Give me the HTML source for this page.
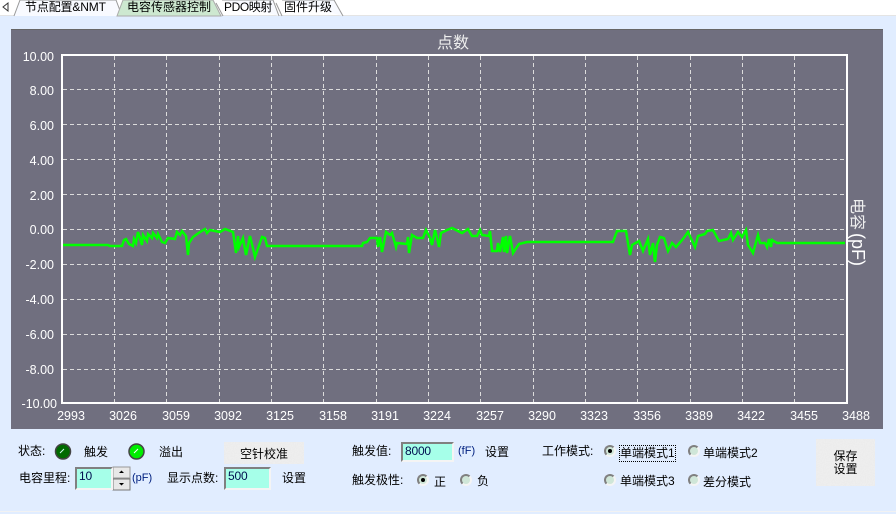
<!DOCTYPE html>
<html><head><meta charset="utf-8">
<style>
html,body{margin:0;padding:0}
body{width:896px;height:514px;overflow:hidden;background:#e1edff;position:relative;font:12px "Liberation Sans","WenQuanYi Zen Hei","Noto Sans CJK SC",sans-serif;color:#000}
.a{position:absolute;white-space:nowrap;line-height:14px}
.inp{position:absolute;box-sizing:border-box;background:#a6ffe9;border:2px solid;border-color:#808080 #f4f4f4 #f4f4f4 #808080;outline:0;font:12px/15px "Liberation Sans",sans-serif;padding-left:2px;color:#001050;letter-spacing:-.2px}
.r{position:absolute;width:12px;height:12px;box-sizing:border-box;border-radius:50%;background:#cfe6d8;border:2px solid;border-color:#808080 #f4f4f4 #f4f4f4 #808080}
.r.on:after{content:"";position:absolute;left:2px;top:2px;width:4px;height:4px;border-radius:50%;background:#000}
.btn{position:absolute;text-align:center}
</style></head><body>
<svg class="a" style="left:0;top:0" width="896" height="514" xmlns="http://www.w3.org/2000/svg">
<defs><filter id="n" x="0" y="0" width="100%" height="100%"><feTurbulence type="fractalNoise" baseFrequency="0.9" numOctaves="2" seed="3"/><feColorMatrix values="0 0 0 0 .8 0 0 0 0 .8 0 0 0 0 .8 .9 0 0 0 -.2"/></filter></defs>
<rect x="0" y="0" width="896" height="16" fill="#fff"/>
<rect x="0" y="15" width="896" height="1" fill="#e4e4e4"/>
<path d="M8 3V11L3 7Z" fill="#fff" stroke="#333"/>
<path d="M14 16L20 0H116L122 16" fill="#f8faff" stroke="#999"/>
<path d="M117 16L123 0H213L221 16Z" fill="#cde8d0" stroke="#aaa"/>
<path d="M216 3L223 16M222 0H273L279 16" fill="#f8faff" stroke="#999"/>
<path d="M276 3L282 16M282 0H334L343 16" fill="#f8faff" stroke="#999"/>
<rect x="11" y="29" width="872" height="400" fill="#706f7f"/>
<rect x="11" y="29" width="872" height="1" fill="#666"/>
<g stroke="#dcdcdc" stroke-width="1" stroke-dasharray="4 3" shape-rendering="crispEdges">
<path d="M114.500 56V402M166.500 56V402M219.500 56V402M271.500 56V402M323.500 56V402M376.500 56V402M428.500 56V402M480.500 56V402M533.500 56V402M585.500 56V402M637.500 56V402M690.500 56V402M742.500 56V402M794.500 56V402"/>
<path d="M63 89.500H846M63 124.500H846M63 159.500H846M63 194.500H846M63 229.500H846M63 264.500H846M63 299.500H846M63 334.500H846M63 369.500H846"/>
</g>
<rect x="62" y="55" width="785" height="348" fill="none" stroke="#fff" stroke-width="2"/>
<polyline fill="none" stroke="#00ff00" stroke-width="2.500" stroke-linejoin="miter" points="63,245 108,245 110,246 122,246 124,240 126,239 129,244 131,245 133,246 134,239 136,243 138,232 142,245 143,235 147,241 148,234 152,238 153,233 157,238 158,234 162,242 165,243 168,238 175,239 177,232 180,235 182,231 186,236 188,255 189,243 193,237 200,232 205,229 207,233 210,230 220,232 225,229 233,232 236,253 238,236 239,247 243,238 246,255 250,236 255,257 262,237 265,238 267,246 362,246 363,243 367,242 370,238 377,238 378,247 380,237 382,252 386,232 390,235 392,233 396,247 397,243 407,244 408,237 409,253 412,235 417,238 423,238 426,230 430,238 432,245 435,230 437,238 439,247 441,233 447,230 452,228 462,233 468,229 472,236 477,236 480,230 482,235 489,236 490,231 492,251 497,251 498,243 500,252 503,237 504,252 506,236 507,253 510,236 513,253 519,244 527,242 613,242 617,231 626,231 630,255 632,245 639,241 643,251 648,239 650,255 653,243 655,262 657,245 660,237 664,238 668,251 672,243 676,247 683,239 688,232 695,247 698,236 705,234 707,231 713,230 719,241 728,239 731,233 733,240 738,232 742,237 746,230 748,245 753,253 758,235 760,243 765,243 767,247 769,239 771,247 772,240 777,243 845,243"/>
<g fill="#fff" font-family="Liberation Sans" font-size="12.500" text-anchor="end">
<text x="54" y="61">10.00</text><text x="54" y="95">8.00</text><text x="54" y="130">6.00</text><text x="54" y="165">4.00</text><text x="54" y="200">2.00</text><text x="54" y="234">0.00</text><text x="54" y="269">-2.00</text><text x="54" y="304">-4.00</text><text x="54" y="339">-6.00</text><text x="54" y="374">-8.00</text><text x="57" y="408">-10.00</text>
</g>
<g fill="#fff" font-family="Liberation Sans" font-size="12.500" text-anchor="middle">
<text x="71" y="420">2993</text><text x="123" y="420">3026</text><text x="176" y="420">3059</text><text x="228" y="420">3092</text><text x="280" y="420">3125</text><text x="333" y="420">3158</text><text x="385" y="420">3191</text><text x="437" y="420">3224</text><text x="490" y="420">3257</text><text x="542" y="420">3290</text><text x="594" y="420">3323</text><text x="647" y="420">3356</text><text x="699" y="420">3389</text><text x="751" y="420">3422</text><text x="804" y="420">3455</text><text x="856" y="420">3488</text>
</g>
<text x="453" y="48" fill="#eee" font-size="16" text-anchor="middle" font-family="WenQuanYi Zen Hei,Noto Sans CJK SC,sans-serif">点数</text>
<text transform="translate(852,198) rotate(90)" fill="#eee" font-size="16" font-family="WenQuanYi Zen Hei,Noto Sans CJK SC,sans-serif">电容</text>
<text transform="translate(852,233) rotate(90)" fill="#fff" font-size="18" font-family="Liberation Sans,sans-serif">(pF)</text>
<rect x="0" y="511" width="896" height="1" fill="#f2f2f2"/>
<circle cx="63" cy="451.500" r="7.500" fill="#006a00" stroke="#444" stroke-width="1.500"/>
<path d="M60 453L64 449" stroke="#cfe" stroke-width="1"/>
<circle cx="136.500" cy="451.500" r="7.500" fill="#00ee00" stroke="#444" stroke-width="1.500"/>
<path d="M134 453L138 449" stroke="#fff" stroke-width="1"/>
<rect x="113" y="467" width="17" height="11" fill="#e8e8e8" stroke="#999"/>
<rect x="113" y="479" width="17" height="11" fill="#e8e8e8" stroke="#777"/>
<path d="M119 473h5l-2.500-2.500Z M119 483h5l-2.500 2.500Z" fill="#000"/>
<rect x="224" y="442" width="80" height="22" fill="#efefef"/>
<rect x="224" y="442" width="80" height="22" filter="url(#n)"/>
<rect x="816" y="439" width="59" height="47" fill="#efefef"/>
<rect x="816" y="439" width="59" height="47" filter="url(#n)"/>
</svg>
<span class="a" style="left:25px;top:0;letter-spacing:-.15px">节点配置&amp;NMT</span>
<span class="a" style="left:127px;top:0">电容传感器控制</span>
<span class="a" style="left:224px;top:0;letter-spacing:-.4px">PDO映射</span>
<span class="a" style="left:284px;top:0">固件升级</span>

<span class="a" style="left:18px;top:444px">状态:</span>
<span class="a" style="left:84px;top:445px">触发</span>
<span class="a" style="left:159px;top:445px">溢出</span>
<div class="btn" style="left:224px;top:442px;width:80px;height:22px;line-height:24px">空针校准</div>
<span class="a" style="left:19px;top:471px">电容里程:</span>
<div class="inp" style="left:75px;top:467px;width:38px;height:23px">10</div>
<span class="a" style="left:132px;top:471px;color:#002080;font-size:11px">(pF)</span>
<span class="a" style="left:167px;top:471px">显示点数:</span>
<div class="inp" style="left:224px;top:467px;width:47px;height:23px">500</div>
<span class="a" style="left:282px;top:471px">设置</span>

<span class="a" style="left:352px;top:444px">触发值:</span>
<div class="inp" style="left:401px;top:442px;width:53px;height:20px">8000</div>
<span class="a" style="left:458px;top:444px;color:#002080;font-size:11px">(fF)</span>
<span class="a" style="left:485px;top:445px">设置</span>
<span class="a" style="left:352px;top:473px">触发极性:</span>
<div class="r on" style="left:417px;top:474px"></div>
<span class="a" style="left:434px;top:475px">正</span>
<div class="r" style="left:460px;top:474px"></div>
<span class="a" style="left:477px;top:474px">负</span>

<span class="a" style="left:542px;top:444px">工作模式:</span>
<div class="r on" style="left:604px;top:445px"></div>
<span class="a" style="left:620px;top:446px;outline:1px dotted #000;outline-offset:0;padding:0 0 1px">单端模式1</span>
<div class="r" style="left:688px;top:445px"></div>
<span class="a" style="left:703px;top:446px">单端模式2</span>
<div class="r" style="left:604px;top:474px"></div>
<span class="a" style="left:620px;top:474px">单端模式3</span>
<div class="r" style="left:688px;top:474px"></div>
<span class="a" style="left:703px;top:475px">差分模式</span>
<div class="btn" style="left:816px;top:439px;width:59px;height:47px;line-height:13px;padding-top:11px;box-sizing:border-box">保存<br>设置</div>
</body></html>
